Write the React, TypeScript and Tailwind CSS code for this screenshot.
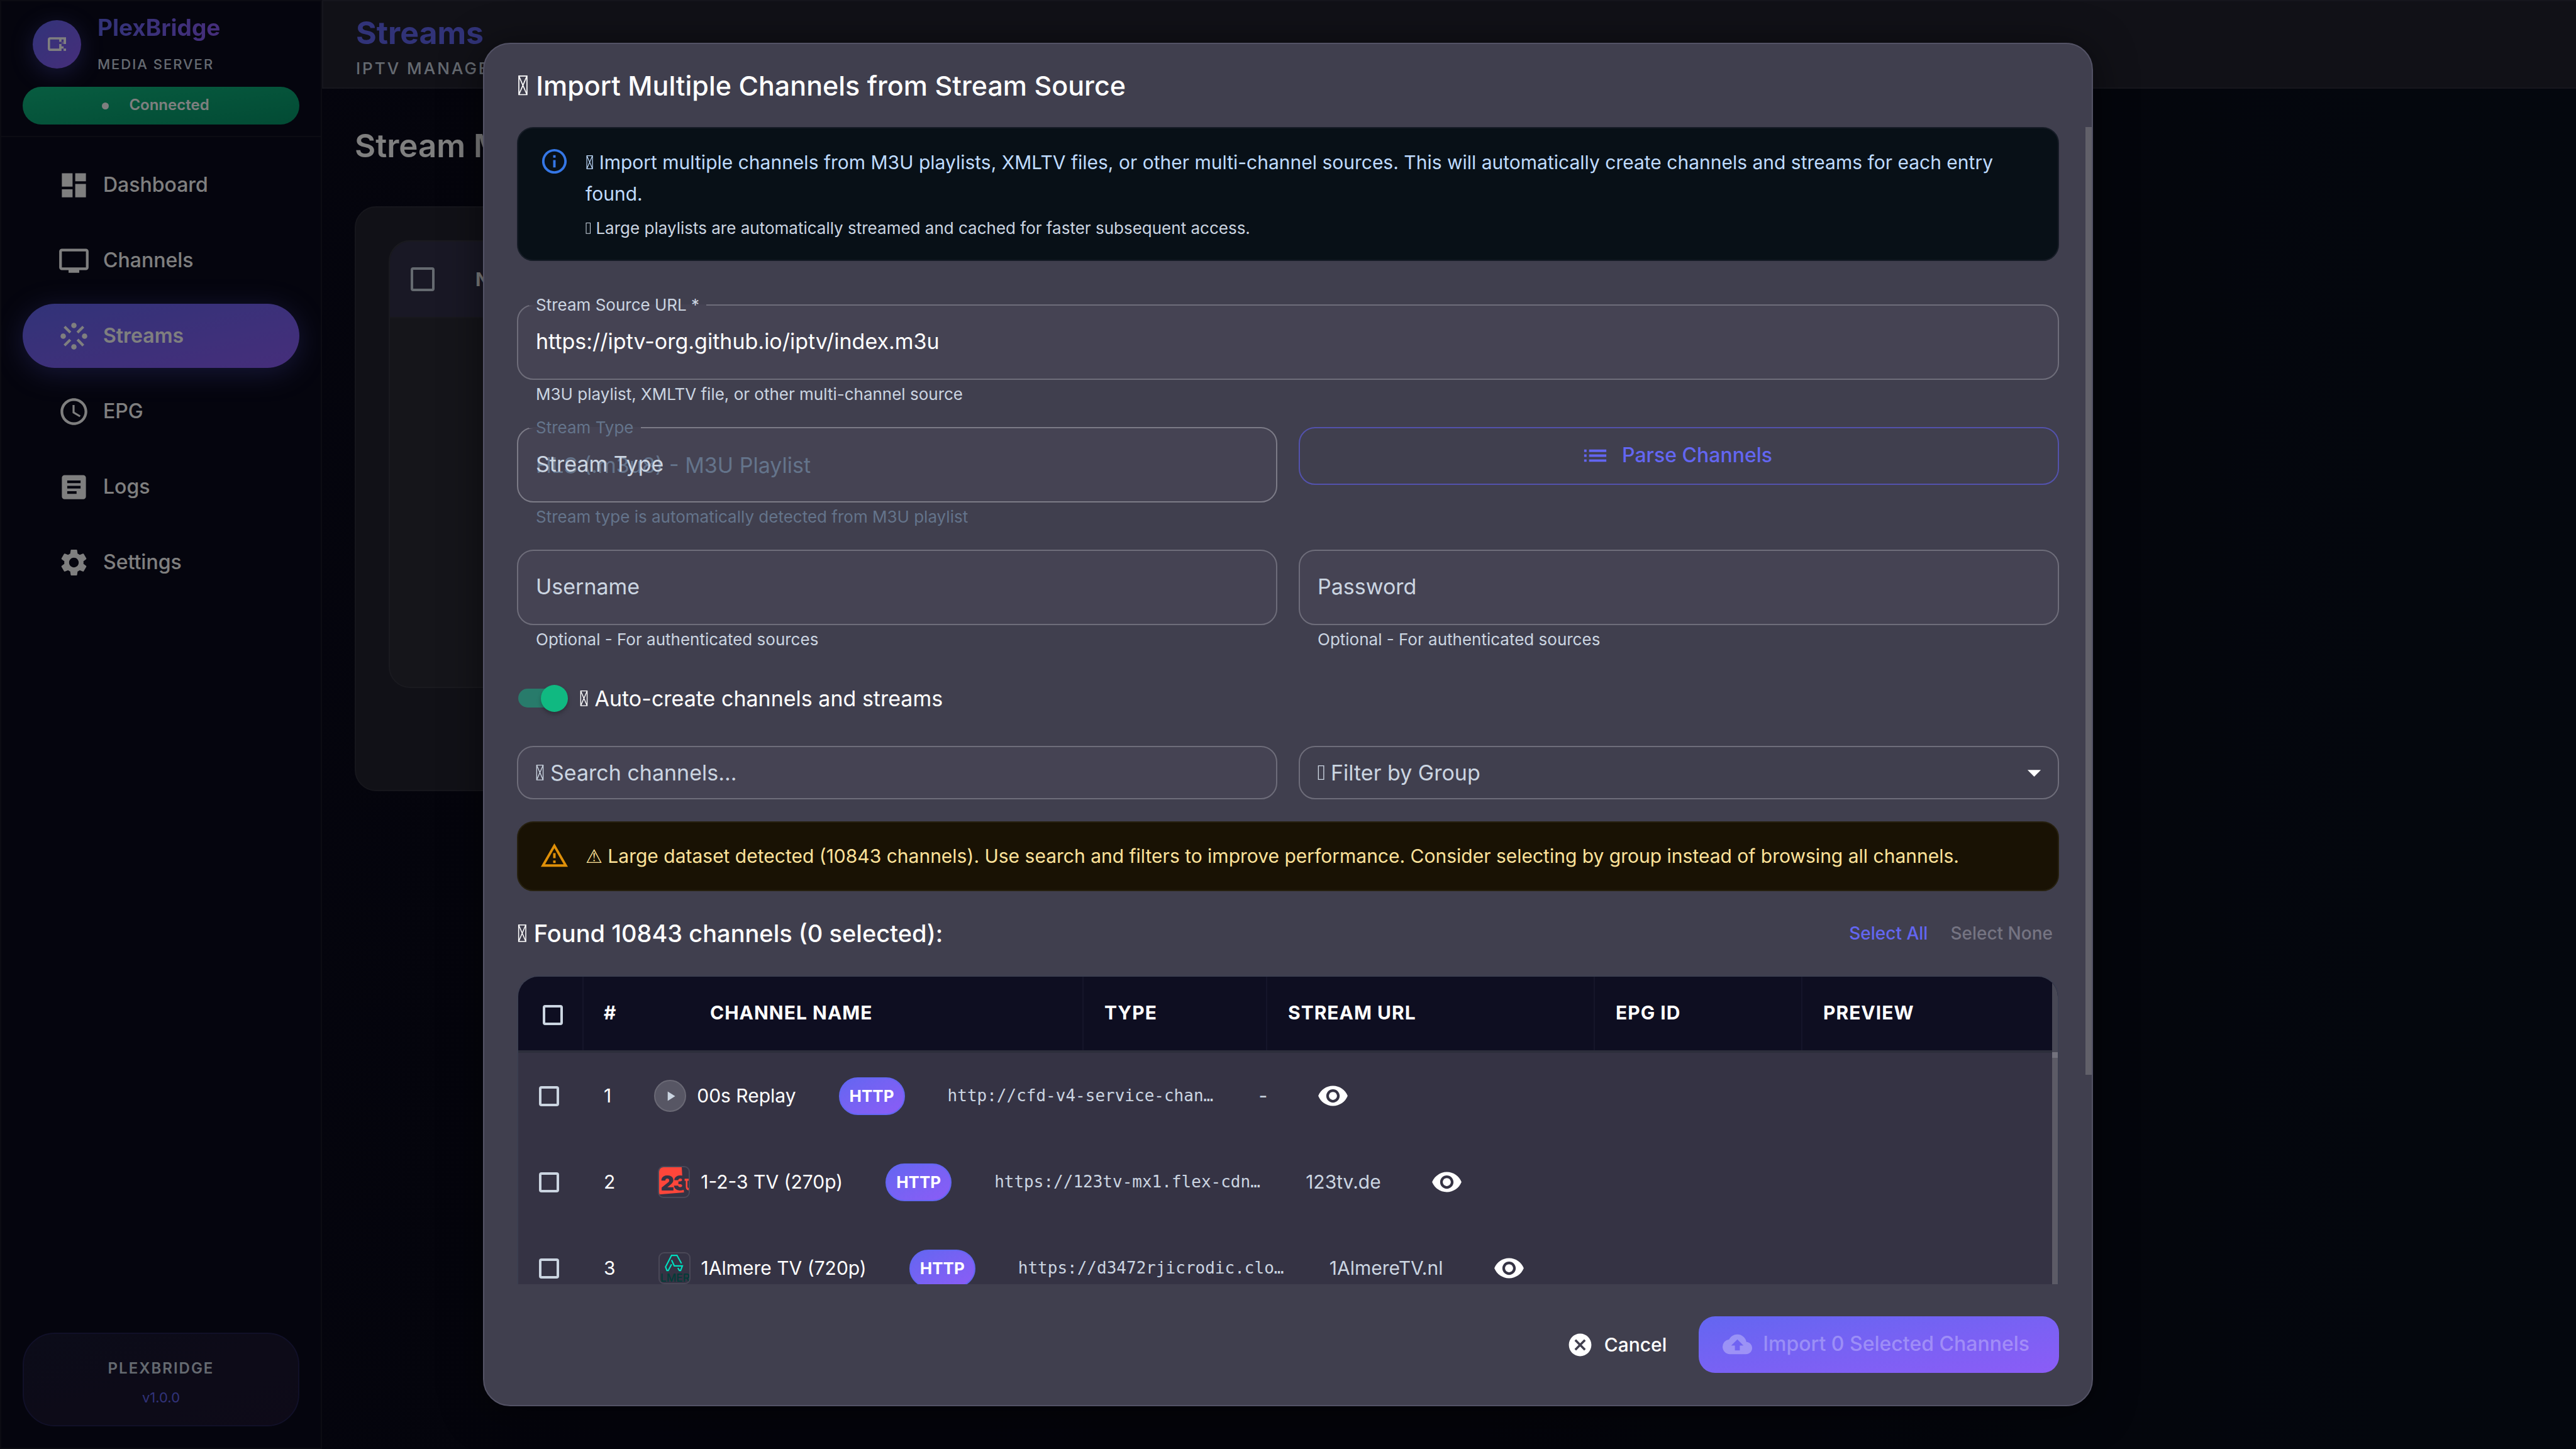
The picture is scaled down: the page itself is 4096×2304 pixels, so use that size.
import type { ReactNode } from "react";
import {
  MdArrowDropDown,
  MdArticle,
  MdCancel,
  MdCloudUpload,
  MdDashboard,
  MdInfoOutline,
  MdList,
  MdOutlineWarningAmber,
  MdPlayArrow,
  MdSchedule,
  MdSettings,
  MdStream,
  MdTv,
  MdVisibility,
} from "react-icons/md";

const navItems = [
  { label: "Dashboard", Icon: MdDashboard },
  { label: "Channels", Icon: MdTv },
  { label: "Streams", Icon: MdStream, active: true },
  { label: "EPG", Icon: MdSchedule },
  { label: "Logs", Icon: MdArticle },
  { label: "Settings", Icon: MdSettings },
];

// Crossed box in front of headings.
function CrossedBox() {
  return (
    <svg viewBox="0 0 44 73" className="inline-block h-[0.73em] w-[0.44em] align-baseline" fill="none" stroke="currentColor" aria-hidden="true">
      <path d="M7 2H37V71H7ZM7 2L37 71M37 2L7 71" strokeWidth="4" />
    </svg>
  );
}

// Empty narrow box in front of secondary texts.
function NarrowBox() {
  return (
    <svg viewBox="0 0 35 68" className="inline-block h-[0.68em] w-[0.35em] align-baseline" fill="none" stroke="currentColor" aria-hidden="true">
      <path d="M4 2H29V66H4Z" strokeWidth="4" />
    </svg>
  );
}

function BrandMark() {
  return (
    <svg viewBox="0 0 112 84" className="h-[22px] w-[29px]" fill="currentColor" aria-hidden="true">
      <path d="M14 0H112V42H97V14H84V28H70V14H16Q14 14 14 16V68Q14 70 16 70H70V42H84V56H97V70H84V84H14Q0 84 0 70V14Q0 0 14 0Z" />
      <path d="M97 70H112V84H97Z" />
      <path d="M84 28H97V42H84Z" opacity="0.35" />
    </svg>
  );
}

function Sidebar() {
  return (
    <aside className="flex w-[512px] shrink-0 flex-col border-2 border-[#191926] bg-[#0a0a1c]">
      <div className="flex h-[216px] flex-col border-b-2 border-[#191926] px-[34px] pt-[20px]">
        <div className="flex items-center gap-[26px] pl-4">
          <div className="flex size-[77px] items-center justify-center rounded-full bg-gradient-to-br from-[#6366f1] to-[#8b5cf6] text-white shadow-[0_8px_34px_rgba(99,102,241,0.4)]">
            <BrandMark />
          </div>
          <div>
            <div className="bg-gradient-to-r from-[#6366f1] to-[#8b5cf6] bg-clip-text text-[37px] leading-[44px] font-bold text-transparent">
              PlexBridge
            </div>
            <div className="mt-[20px] text-[22px] leading-[32px] font-medium tracking-[2px] text-[#cbd5e1]">
              MEDIA SERVER
            </div>
          </div>
        </div>
        <div className="mt-[20px] flex h-[60px] items-center justify-center gap-[32px] rounded-full bg-gradient-to-br from-[#10b981] to-[#059669] pr-[17px] text-[24px] font-semibold text-white">
          <span className="size-[11px] rounded-full bg-white" />
          <span className="pb-[2px]">Connected</span>
        </div>
      </div>
      <nav className="flex flex-col gap-[18px] px-[34px] pt-[25px]">
        {navItems.map(({ label, Icon, active }) => (
          <a
            key={label}
            href="#"
            className={
              active
                ? "flex h-[102px] items-center gap-[21px] rounded-full bg-gradient-to-br from-[#6366f1] to-[#8b5cf6] pl-[56px] text-[32px] font-semibold text-white shadow-[0_8px_43px_rgba(99,102,241,0.4)]"
                : "flex h-[102px] items-center gap-[21px] rounded-full pl-[56px] text-[32px] font-medium text-white"
            }
          >
            <Icon className="size-[51px]" />
            {label}
          </a>
        ))}
      </nav>
      <div className="mx-[34px] mt-auto mb-[34px] flex h-[149px] flex-col items-center justify-center gap-[12px] rounded-[51px] border-2 border-[#222150] bg-gradient-to-br from-[#181832] to-[#1c1530] pt-[10px]">
        <span className="text-[24px] leading-[34px] font-semibold tracking-[2px] text-[#cbd5e1]">PLEXBRIDGE</span>
        <span className="text-[22px] leading-[34px] text-[#6366f1]">v1.0.0</span>
      </div>
    </aside>
  );
}

function Background() {
  return (
    <div className="flex h-screen w-full bg-gradient-to-r from-[#0a0a1c] via-[#080814] to-[#080f1c]">
      <Sidebar />
      <main className="min-w-0 flex-1">
        <header className="flex h-[141px] flex-col border-y-2 border-l-2 border-[#2c2c3a] bg-[#23222f] pt-[17px] pl-[52px]">
          <h1 className="text-[50px] leading-[66px] font-bold text-[#6366f1]">Streams</h1>
          <p className="pt-[3px] text-[26px] leading-[42px] font-medium tracking-[3px] text-[#cbd5e1]">IPTV MANAGEMENT</p>
        </header>
        <div className="px-[52px] pt-[59px]">
          <h2 className="text-[51px] leading-[64px] font-semibold text-white">Stream Management</h2>
          <section className="mt-[64px] h-[930px] max-w-[2600px] rounded-[34px] border-2 border-[#2c2c38] bg-[#23232e] p-[52px]">
            <div className="h-[712px] overflow-hidden rounded-[34px] border-2 border-[#34343f] bg-[#2a2a35]">
              <div className="flex h-[122px] items-center gap-[65px] border-b-2 border-[#30303a] bg-[#32304a] pl-[33px] text-[30px] font-bold text-white">
                <input
                  type="checkbox"
                  aria-label="Select all streams"
                  className="size-[38px] appearance-none rounded-[4px] border-4 border-[#cbd5e1]"
                />
                NAME
              </div>
            </div>
          </section>
        </div>
      </main>
    </div>
  );
}

function OutlinedField({ label, children, className }: { label: string; children: ReactNode; className: string }) {
  return (
    <fieldset className={className}>
      <legend className="ml-[17px] h-[2px] px-[11px] text-[26px] leading-[2px]">{label}</legend>
      {children}
    </fieldset>
  );
}

function Helper({ children, muted }: { children: ReactNode; muted?: boolean }) {
  return (
    <p
      className={
        muted
          ? "mt-[6px] pl-[30px] text-[26px] leading-[34px] text-[#64748b]"
          : "mt-[6px] pl-[30px] text-[26px] leading-[34px] text-[#cbd5e1]"
      }
    >
      {children}
    </p>
  );
}

function Tv123Logo() {
  return (
    <svg viewBox="0 0 197 197" className="size-full" aria-hidden="true">
      <path d="M0 0H151L154 55L166 168L0 181Z" fill="#ff463a" />
      <text x="9" y="153" fontFamily="Inter" fontWeight="900" fontSize="140" letterSpacing="-6" fill="#353344">
        23
      </text>
      <path d="M170 76H197V90H189V130Q189 138 197 138V154Q178 152 178 128V90H170Z" fill="#ff463a" />
    </svg>
  );
}

function AlmereLogo() {
  return (
    <svg viewBox="0 0 197 197" className="size-full" aria-hidden="true">
      <path
        d="M145 67L115 13H79L39 90L48 114H57L79 72M79 44L97 83H151L139 114H131L121 97"
        fill="none"
        stroke="#00e0c0"
        strokeWidth="9"
      />
      <text x="4" y="188" fontFamily="Inter" fontWeight="500" fontSize="72" fill="#003c37">
        LMER
      </text>
    </svg>
  );
}

const channels = [
  { id: 1, name: "00s Replay", url: "http://cfd-v4-service-chan…", epg: "-", logo: null },
  { id: 2, name: "1-2-3 TV (270p)", url: "https://123tv-mx1.flex-cdn…", epg: "123tv.de", logo: <Tv123Logo /> },
  { id: 3, name: "1Almere TV (720p)", url: "https://d3472rjicrodic.clo…", epg: "1AlmereTV.nl", logo: <AlmereLogo /> },
];

function ChannelTable() {
  const head = "border-l-2 border-[#15152a] pl-[33px] text-left font-bold";
  return (
    <div className="relative min-h-0 flex-1 overflow-hidden rounded-t-[34px] border-2 border-b-0 border-[#3c3f50] bg-[#353344]">
      <table className="block w-full">
        <thead className="block">
          <tr className="flex h-[121px] border-b-4 border-[#2c2e3b] bg-[#0e0e21] text-[30px] leading-[115px] tracking-[1px] text-white">
            <th className="flex w-[102px] items-center pt-1 pl-[39px]">
              <input type="checkbox" aria-label="Select all channels" className="size-[32px] appearance-none rounded-[4px] border-4 border-[#cbd5e1]" />
            </th>
            <th className="w-[170px] border-l-2 border-[#15152a] pl-[32px] text-left font-bold">#</th>
            <th className="w-[625px] pl-[33px] text-left font-bold">CHANNEL NAME</th>
            <th className={`w-[292px] ${head}`}>TYPE</th>
            <th className={`w-[521px] ${head}`}>STREAM URL</th>
            <th className={`w-[330px] ${head}`}>EPG ID</th>
            <th className={`flex-1 ${head}`}>PREVIEW</th>
          </tr>
        </thead>
        <tbody className="block">
          {channels.map((c) => (
            <tr key={c.id} className="flex h-[137px] items-center gap-[68px] pl-[33px] text-[30px] text-white">
              <td className="-mr-[34px] flex w-[69px] shrink-0">
                <input type="checkbox" aria-label={`Select ${c.name}`} className="size-[32px] appearance-none rounded-[4px] border-4 border-[#cbd5e1]" />
              </td>
              <td>{c.id}</td>
              <td className="flex items-center gap-[17px]">
                {c.logo ? (
                  <span className="size-[51px] overflow-hidden rounded-[9px] border-2 border-[#4a4857]">{c.logo}</span>
                ) : (
                  <span className="flex size-[51px] items-center justify-center rounded-full border-2 border-[#6a6975] bg-[#575664] text-[#cbd5e1]">
                    <MdPlayArrow className="size-[26px]" />
                  </span>
                )}
                {c.name}
              </td>
              <td>
                <span className="flex h-[60px] items-center rounded-full border-2 border-[#6366f1] bg-gradient-to-br from-[#6366f1] to-[#8b5cf6] px-[15px] text-[26px] font-bold">
                  HTTP
                </span>
              </td>
              <td className="w-[427px] font-['DejaVu_Sans_Mono',monospace] text-[26px] whitespace-nowrap text-[#cbd5e1]">{c.url}</td>
              <td className="text-[#cbd5e1]">{c.epg}</td>
              <td>
                <button type="button" aria-label={`Preview ${c.name}`} className="flex p-[11px]">
                  <MdVisibility className="size-[51px]" />
                </button>
              </td>
            </tr>
          ))}
        </tbody>
      </table>
      <div className="absolute inset-y-0 right-0 flex w-[9px] flex-col">
        <div className="h-[120px] bg-[#484855]" />
        <div className="h-[9px] bg-[#73727d]" />
        <div className="flex-1 bg-[#5c5b66]" />
      </div>
    </div>
  );
}

function ImportDialog() {
  return (
    <div
      role="dialog"
      aria-labelledby="import-title"
      className="relative flex h-full w-full max-w-[2560px] flex-col rounded-[43px] border-2 border-[#535265] bg-[#403f4e] shadow-[0_8px_64px_rgba(0,0,0,0.5)]"
    >
      <div className="flex h-[132px] shrink-0 items-center px-[52px]">
        <h2 id="import-title" className="text-[43px] font-medium text-white">
          <CrossedBox /> Import Multiple Channels from Stream Source
        </h2>
      </div>

      <div className="flex min-h-0 flex-1 flex-col overflow-hidden px-[52px]">
        <div className="flex shrink-0 rounded-[26px] border-2 border-[#161c26] bg-[#081017] px-[34px] py-[29px]">
          <MdInfoOutline className="mr-[26px] size-[47px] shrink-0 text-[#3577e6]" />
          <div>
            <p className="text-[30px] leading-[50px] text-[#bfdbfe]">
              <CrossedBox /> Import multiple channels from M3U playlists, XMLTV files, or other multi-channel sources. This will
              automatically create channels and streams for each entry found.
            </p>
            <p className="mt-[8px] text-[26px] leading-[43px] text-[#cbd5e1]">
              <NarrowBox /> Large playlists are automatically streamed and cached for faster subsequent access.
            </p>
          </div>
        </div>

        <div className="mt-[69px] grid grid-cols-2 gap-x-[34px] gap-y-[35px]">
          <div className="col-span-2">
            <OutlinedField label="Stream Source URL *" className="rounded-[26px] border-2 border-[#6e6d7a] bg-[#454353] text-[#cbd5e1]">
              <input
                aria-label="Stream Source URL"
                defaultValue="https://iptv-org.github.io/iptv/index.m3u"
                className="block h-[116px] w-full bg-transparent px-[28px] pb-[4px] text-[34px] text-white outline-none"
              />
            </OutlinedField>
            <Helper>M3U playlist, XMLTV file, or other multi-channel source</Helper>
          </div>

          <div>
            <div className="relative">
              <OutlinedField label="Stream Type" className="rounded-[26px] border-2 border-[#7c7b87] bg-[#454353] text-[#64748b]">
                <select
                  disabled
                  id="stream-type"
                  className="block h-[116px] w-full appearance-none bg-transparent px-[28px] text-[34px] text-[#64748b] opacity-100"
                >
                  <option>HLS (.m3u8) - M3U Playlist</option>
                </select>
              </OutlinedField>
              <label htmlFor="stream-type" className="absolute inset-y-0 left-[30px] flex items-center pb-[4px] text-[34px] text-[#cbd5e1]">
                Stream Type
              </label>
            </div>
            <Helper muted>Stream type is automatically detected from M3U playlist</Helper>
          </div>
          <div>
            <button
              type="button"
              className="flex h-[92px] w-full items-center justify-center gap-[19px] rounded-[26px] border-2 border-[#5352ac] pr-2 pb-[2px] text-[32px] font-medium text-[#6366f1]"
            >
              <MdList className="size-[47px]" />
              Parse Channels
            </button>
          </div>

          <div>
            <input
              aria-label="Username"
              placeholder="Username"
              className="block h-[120px] w-full rounded-[26px] border-2 border-[#6e6d7a] bg-[#454353] px-[28px] pb-[4px] text-[34px] placeholder:text-[#cbd5e1]"
            />
            <Helper>Optional - For authenticated sources</Helper>
          </div>
          <div>
            <input
              type="password"
              aria-label="Password"
              placeholder="Password"
              className="block h-[120px] w-full rounded-[26px] border-2 border-[#6e6d7a] bg-[#454353] px-[28px] pb-[4px] text-[34px] placeholder:text-[#cbd5e1]"
            />
            <Helper>Optional - For authenticated sources</Helper>
          </div>

          <label className="col-span-2 flex h-[82px] items-center gap-[18px] text-[34px] text-white">
            <span className="relative flex h-[43px] w-[81px] items-center">
              <input type="checkbox" defaultChecked className="ml-[2px] h-[30px] w-[73px] appearance-none rounded-full bg-[#287b6b]" />
              <span className="absolute right-0 size-[43px] rounded-full bg-[#10b981] shadow-[0_4px_6px_rgba(0,0,0,0.25)]" />
            </span>
            <span>
              <CrossedBox /> Auto-create channels and streams
            </span>
          </label>

          <div className="relative text-[34px] text-[#cbd5e1]">
            <span className="pointer-events-none absolute inset-y-0 left-[29px] flex items-center">
              <CrossedBox />
            </span>
            <input
              aria-label="Search channels"
              placeholder="Search channels..."
              className="block h-[85px] w-full rounded-[26px] border-2 border-[#6e6d7a] bg-[#454353] pr-[28px] pl-[51px] placeholder:text-[#cbd5e1]"
            />
          </div>
          <div className="relative text-[34px] text-[#cbd5e1]">
            <span className="pointer-events-none absolute inset-y-0 left-[30px] flex items-center">
              <NarrowBox />
            </span>
            <select
              aria-label="Filter by group"
              className="block h-[85px] w-full appearance-none rounded-[26px] border-2 border-[#6e6d7a] bg-transparent pr-[28px] pl-[49px]"
            >
              <option>Filter by Group</option>
            </select>
            <MdArrowDropDown className="pointer-events-none absolute top-[17px] right-[14px] size-[51px] text-white" />
          </div>
        </div>

        <div className="mt-[35px] flex shrink-0 rounded-[26px] border-2 border-[#26200f] bg-[#191204] px-[34px] py-[29px]">
          <MdOutlineWarningAmber className="mr-[26px] size-[47px] shrink-0 text-[#df9009]" />
          <p className="text-[30px] leading-[49px] text-[#fde29a]">
            <span className="font-['DejaVu_Sans',sans-serif]">⚠</span> Large dataset detected (10843 channels). Use search and filters to
            improve performance. Consider selecting by group instead of browsing all channels.
          </p>
        </div>

        <div className="mt-[34px] mb-[34px] flex h-[66px] shrink-0 items-center">
          <h3 className="flex-1 text-[38px] font-medium text-white">
            <CrossedBox /> Found 10843 channels (0 selected):
          </h3>
          <button type="button" className="px-[10px] text-[28px] font-medium text-[#6366f1]">
            Select All
          </button>
          <button type="button" disabled className="ml-[16px] px-[10px] text-[28px] font-medium text-[#757482]">
            Select None
          </button>
        </div>

        <ChannelTable />
      </div>

      <div className="flex h-[192px] shrink-0 items-center justify-end px-[52px]">
        <button type="button" className="mr-[51px] flex items-center gap-[17px] text-[30px] font-medium text-white">
          <MdCancel className="size-[43px]" />
          Cancel
        </button>
        <button
          type="button"
          disabled
          className="flex h-[90px] items-center gap-[17px] rounded-[26px] bg-gradient-to-br from-[#6366f1] to-[#8b5cf6] pr-[47px] pb-[2px] pl-[38px] text-[32px] font-medium text-white/30"
        >
          <MdCloudUpload className="size-[47px]" />
          Import 0 Selected Channels
        </button>
      </div>

      <div className="absolute top-[132px] right-0 h-[1507px] w-[10px] bg-[#616069]" />
    </div>
  );
}

export default function App() {
  return (
    <div className="relative h-screen w-full overflow-hidden bg-black font-['Inter',sans-serif]">
      <Background />
      <div className="absolute inset-0 flex items-center justify-center bg-black/50 px-[68px] py-[68px]">
        <ImportDialog />
      </div>
    </div>
  );
}
